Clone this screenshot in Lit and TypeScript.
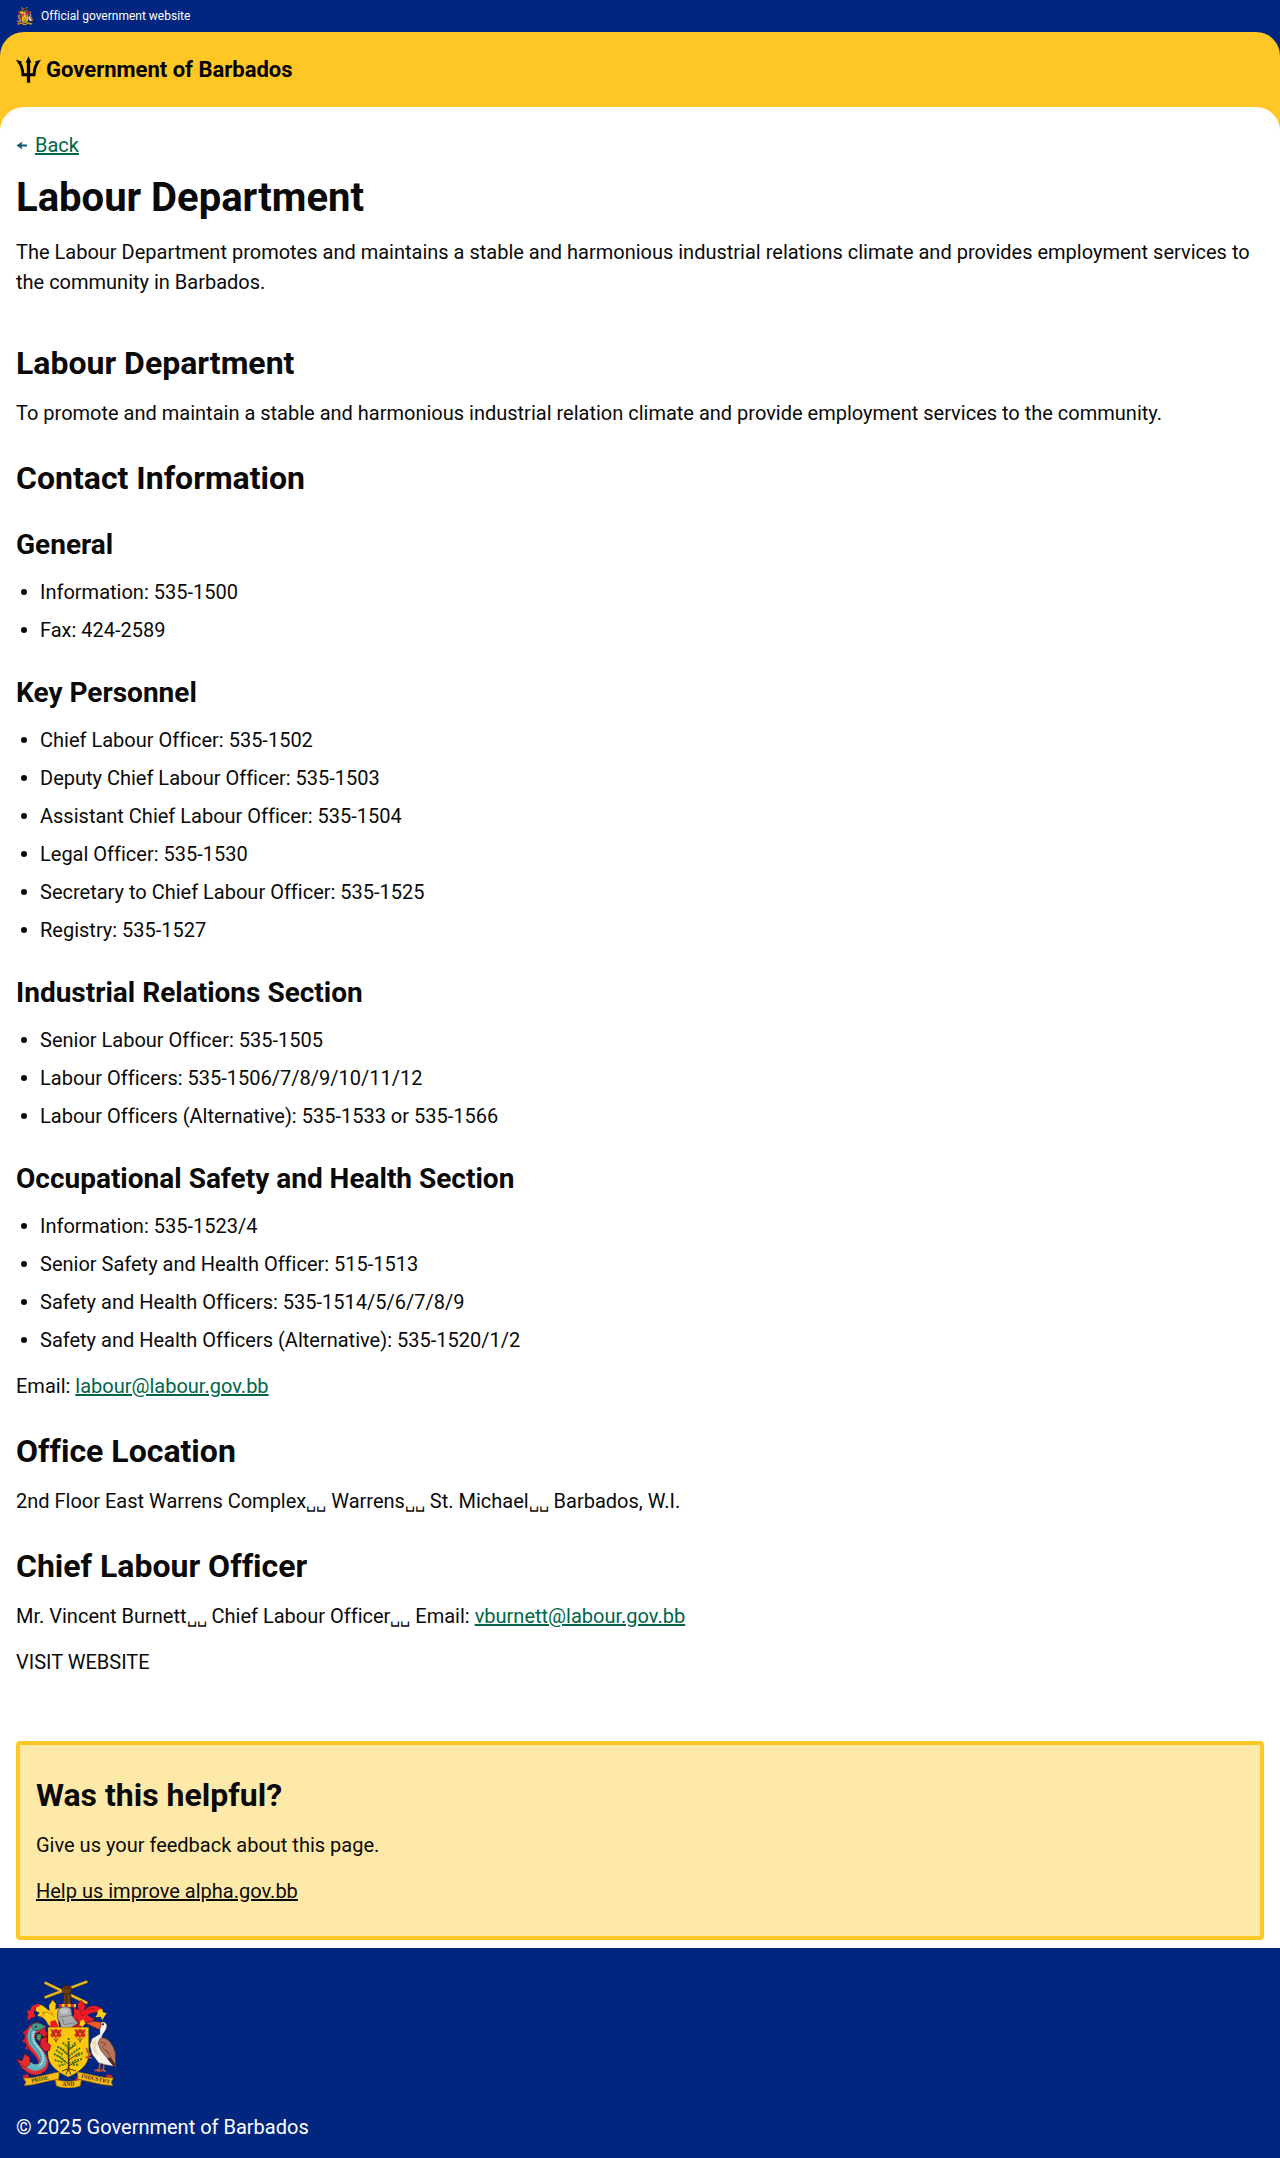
import { LitElement, html, css, svg } from "lit";
import { customElement, property } from "lit/decorators.js";

interface ContactGroup {
  title: string;
  entries: string[];
}

const CONTACT_GROUPS: ContactGroup[] = [
  {
    title: "General",
    entries: ["Information: 535-1500", "Fax: 424-2589"],
  },
  {
    title: "Key Personnel",
    entries: [
      "Chief Labour Officer: 535-1502",
      "Deputy Chief Labour Officer: 535-1503",
      "Assistant Chief Labour Officer: 535-1504",
      "Legal Officer: 535-1530",
      "Secretary to Chief Labour Officer: 535-1525",
      "Registry: 535-1527",
    ],
  },
  {
    title: "Industrial Relations Section",
    entries: [
      "Senior Labour Officer: 535-1505",
      "Labour Officers: 535-1506/7/8/9/10/11/12",
      "Labour Officers (Alternative): 535-1533 or 535-1566",
    ],
  },
  {
    title: "Occupational Safety and Health Section",
    entries: [
      "Information: 535-1523/4",
      "Senior Safety and Health Officer: 515-1513",
      "Safety and Health Officers: 535-1514/5/6/7/8/9",
      "Safety and Health Officers (Alternative): 535-1520/1/2",
    ],
  },
];

// One flower of the pair in the upper corners of the shield.
const flower = (x: number) => svg`
  <g transform="translate(${x} 221)">
    <path d="M-17-14L-7-11L0-15L8-11L17-14L14-3L17 6L9 12L3 8L0 14L-5 8L-11 12L-17 5L-13-3Z" fill="#d8301c" />
    <path d="M-8-4l5 4l-6 4M8-5l-5 5l6 4M0-8v6" stroke="#7a1a0c" stroke-width="2" fill="none" />
    <circle r="3" fill="#ffc726" />
    <path d="M0 12v15M-7 14l7 9l7-9" stroke="#8a4a12" stroke-width="3" fill="none" />
  </g>`;

@customElement("coat-of-arms")
export class CoatOfArms extends LitElement {
  static styles = css`
    :host {
      display: block;
      flex: none;
    }
    svg {
      display: block;
      width: 100%;
      height: 100%;
    }
    .motto {
      font: 700 17px "Liberation Serif", serif;
      fill: #4a3208;
      text-anchor: middle;
    }
  `;

  @property() label = "";

  render() {
    return html`
      <svg viewBox="48 60 300 324" role="img" aria-label=${this.label}>
        <!-- crossed canes held in a raised fist -->
        <path d="M134 113L262 65M134 68L262 130" stroke="#8f6a10" stroke-width="9" />
        <path d="M134 112L262 64M134 67L262 129" stroke="#eebd22" stroke-width="6" />
        <path d="M192 92L188 142H213L212 92Z" fill="#6b3d1c" stroke="#2c1608" stroke-width="2" />
        <path d="M187 84L193 77L207 76L214 83L213 96L205 103L193 102L187 95Z" fill="#6b3d1c" stroke="#2c1608" stroke-width="2" />
        <path d="M195 79v10M202 78v10M208 80v9M199 104v30" stroke="#2c1608" stroke-width="2" />

        <!-- mantling, left -->
        <path d="M178 203C165 208 150 205 142 190C138 178 128 170 112 168L118 158L106 152C112 138 104 134 92 146C104 130 122 130 136 143L148 152L147 136L158 120L168 132L166 148L178 143L172 165Z" fill="#ffcb14" stroke="#6b4d00" stroke-width="1" />
        <path d="M116 133C98 134 92 143 92 151L80 152L85 162L82 173L86 182L93 174L106 170L102 158C102 148 108 140 120 139Z" fill="#ee1c25" />
        <path d="M118 174L134 161L126 158L141 156L156 165M150 152L163 172" stroke="#a87800" stroke-width="2" fill="none" />
        <path d="M152 184L166 180L176 200L160 208L150 198Z" fill="#ee1c25" />

        <!-- mantling, right -->
        <path d="M225 200C240 204 254 198 260 186L276 184L284 177L272 172L262 165C276 156 290 154 300 160L308 150C294 134 272 134 258 146L250 154L256 138L244 120L232 132L236 150L222 144L222 165L212 172Z" fill="#ee1c25" stroke="#8c0a10" stroke-width="1" />
        <path d="M294 150L307 146L308 156L320 160L313 170L307 180L302 170L286 172L292 163Z" fill="#ffcb14" />
        <path d="M240 184L250 178L256 190L248 200L238 196Z" fill="#ffcb14" />
        <path d="M240 150L246 168L258 160M262 148L284 146" stroke="#8c0a10" stroke-width="2" fill="none" />

        <!-- wreath -->
        <path d="M176 137L228 137" stroke="#ee1c25" stroke-width="10" stroke-dasharray="9 9" />
        <path d="M185 137L228 137" stroke="#ffcb14" stroke-width="10" stroke-dasharray="9 9" />

        <!-- helmet -->
        <path d="M182 198L206 188L230 174L240 190L232 204L202 207Z" fill="#b5172a" />
        <path d="M174 150C184 138 204 138 213 147L216 167L234 190L214 202L184 205L180 188L172 174Z" fill="#a9abae" stroke="#4b4d52" stroke-width="2" />
        <path d="M175 172L215 166M188 176L192 194L226 188" stroke="#6b6d72" stroke-width="2" fill="none" />
        <path d="M180 149Q194 142 206 149L203 160L184 162Z" fill="#c4c6c8" />

        <!-- shield with bearded fig tree -->
        <path d="M144 202H266V285C264 315 240 335 205 351C170 335 146 315 144 285Z" fill="#fdc70e" stroke="#7d5a00" stroke-width="1" />
        ${flower(168)} ${flower(240)}
        <g fill="none" stroke="#4a3412" stroke-linecap="round">
          <path d="M206 250C203 280 209 300 205 330" stroke-width="5" />
          <path d="M206 312L170 286M206 300L238 278M206 286L180 264M206 270L228 254M206 318L236 302M205 326L187 333M206 326L226 332M205 328L198 342M206 328L212 342" stroke-width="3" />
        </g>
        <g fill="none" stroke="#3c7a1e" stroke-width="6" stroke-dasharray="6 3">
          <path d="M162 282L184 293L196 306M164 300L190 308M172 260L190 270L203 284M188 248L204 262M206 234V266M226 248L210 266M240 264L222 276L209 288M248 279L226 290M246 297L224 302L212 312M168 270L188 284M234 314L216 314M176 318L196 312" />
        </g>

        <!-- dolphin -->
        <path d="M114 196L138 196L136 212L144 222L134 232L120 222Z" fill="#d5202f" stroke="#7d0b16" stroke-width="2" />
        <path d="M80 208L68 218L78 228L66 246L80 250L76 268L92 268Z" fill="#d5202f" />
        <path d="M118 200C86 206 82 240 104 264C132 292 140 316 116 328C96 334 80 318 70 304" fill="none" stroke="#8d1420" stroke-width="32" />
        <path d="M118 200C86 206 82 240 104 264C132 292 140 316 116 328C96 334 80 318 70 304" fill="none" stroke="#e0303a" stroke-width="28" />
        <path d="M118 200C88 206 86 238 106 260C132 288 138 310 118 320C104 326 92 320 82 312" fill="none" stroke="#5fb4bd" stroke-width="19" />
        <path d="M106 212C94 220 96 242 112 258C134 284 136 306 116 318" fill="none" stroke="#d9f0ee" stroke-width="5" stroke-dasharray="3 3" />
        <path d="M98 208C86 224 90 246 104 262C124 284 130 300 112 314" fill="none" stroke="#1d5a70" stroke-width="3" stroke-dasharray="3 4" />
        <path d="M94 198C100 186 120 186 130 196L138 197L126 208L104 212Z" fill="#4a9a86" stroke="#14424c" stroke-width="2" />
        <circle cx="108" cy="200" r="3" fill="#0a1c20" />
        <path d="M112 222L124 224L120 244L110 236Z" fill="#4ea23b" />
        <path d="M122 236L142 230L140 246L152 256L148 272L134 274L120 256Z" fill="#e02030" stroke="#7d0b16" stroke-width="2" />
        <path d="M49 298L66 302L74 282L90 292L88 314L76 322L60 312Z" fill="#e3302f" stroke="#7d0b16" stroke-width="2" />

        <!-- pelican -->
        <path d="M300 306L298 328L284 332M312 306L310 330L292 334M310 332L318 334M272 282L262 276L260 264M272 284L260 292L276 294" fill="none" stroke="#c4552a" stroke-width="5" />
        <path d="M300 200C298 184 314 182 320 194C322 210 308 218 304 232L324 240L334 300L340 318L318 314L296 308L276 282L270 256L276 236L300 222Z" fill="#f4f2ea" stroke="#6b5a4a" stroke-width="1" />
        <path d="M300 236C320 228 338 250 346 278L347 324L328 302L302 270L294 250Z" fill="#b9745c" stroke="#5f3325" stroke-width="2" />
        <path d="M300 244L318 252L306 262L330 282M318 270L340 304" fill="none" stroke="#6d3a2b" stroke-width="2" />
        <path d="M322 296L347 326L344 310L330 292Z" fill="#4a2c25" />
        <path d="M276 244L290 240L288 264L296 288L280 274Z" fill="#f1deb0" />
        <path d="M256 189L280 184L302 187L304 196L298 208L280 200Z" fill="#ee5a2c" stroke="#7a2a12" stroke-width="2" />
        <circle cx="309" cy="193" r="3" fill="#111" />

        <!-- motto scroll -->
        <path d="M68 346L84 342L88 358L72 362ZM318 342L336 346L340 360L322 358ZM160 350L184 362L168 374ZM232 350L244 374L222 364Z" fill="#d5202f" />
        <path d="M70 354C104 356 138 342 178 336L176 358C140 362 106 376 72 377L78 366Z" fill="#f8bd1c" stroke="#8a5f00" stroke-width="2" />
        <path d="M232 336C270 342 304 354 340 354L334 366L338 377C304 376 268 364 234 358Z" fill="#f8bd1c" stroke="#8a5f00" stroke-width="2" />
        <path d="M166 358C190 366 220 366 244 358L241 378C220 386 190 386 169 378Z" fill="#f8bd1c" stroke="#8a5f00" stroke-width="2" />
        <text class="motto" transform="translate(121 363) rotate(-12)">PRIDE</text>
        <text class="motto" x="205" y="378">AND</text>
        <text class="motto" transform="translate(286 362) rotate(12)">INDUSTRY</text>
      </svg>
    `;
  }
}

@customElement("app-root")
export class AppRoot extends LitElement {
  static styles = css`
    :host {
      display: block;
      font: 400 20px/30px Roboto, sans-serif;
      font-variant-ligatures: none;
      color: #0a0a0a;
      background: #fff;
    }
    h1,
    h2,
    h3,
    p,
    ul {
      margin: 0;
      padding: 0;
    }
    a {
      color: #00654a;
      text-decoration: underline 2px;
    }
    svg {
      display: block;
      flex: none;
    }

    .masthead {
      background: #00267f;
    }
    .official {
      display: flex;
      align-items: center;
      gap: 8px;
      padding: 7px 16px;
      font-size: 12px;
      line-height: 18px;
      color: #fff;
    }
    .official-crest {
      width: 17px;
      height: 18px;
    }
    .brand {
      display: flex;
      padding: 24px 16px;
      border-radius: 24px 24px 0 0;
      background: #ffc726;
    }
    .brand-link {
      display: flex;
      align-items: center;
      gap: 5px;
      font-size: 22px;
      font-weight: 700;
      line-height: 27px;
      color: #000;
      text-decoration: none;
    }
    .trident {
      width: 25px;
      height: 27px;
    }

    .stage {
      background: #ffc726;
    }
    .sheet {
      padding: 24px 16px 8px;
      border-radius: 24px 24px 0 0;
      background: #fff;
    }
    .back {
      display: flex;
      align-items: center;
      gap: 8px;
      margin-bottom: 16px;
      line-height: 28px;
    }
    .back-arrow {
      width: 11px;
      height: 9px;
      fill: #0b5a64;
    }
    .title {
      margin-bottom: 16px;
      font-size: 40px;
      line-height: 46px;
    }
    .lead {
      margin-bottom: 48px;
    }
    .heading {
      margin: 32px 0 16px;
      font-size: 32px;
      line-height: 37px;
    }
    .heading.first {
      margin-top: 0;
    }
    .subheading {
      margin: 32px 0 16px;
      font-size: 28px;
      line-height: 32px;
    }
    .list {
      display: grid;
      gap: 8px;
      list-style: none;
    }
    .item {
      display: flex;
      align-items: center;
      gap: 13px;
      padding-left: 5px;
    }
    .item::before {
      content: "";
      flex: none;
      width: 6px;
      height: 6px;
      border-radius: 50%;
      background: currentColor;
    }
    .para {
      margin-top: 16px;
    }
    .blank {
      font-size: 16px;
      line-height: 16px;
    }

    .helpful {
      display: flow-root;
      margin-top: 64px;
      padding: 0 16px 30px;
      border: 4px solid #ffc726;
      border-radius: 4px;
      background: #ffe9a8;
    }
    .helpful-link {
      color: inherit;
    }

    .footer {
      display: grid;
      gap: 24px;
      padding: 32px 16px 16px;
      color: #fff;
      background: #00267f;
    }
    .footer-crest {
      width: 100px;
      height: 108px;
    }
  `;

  private blank = html`<span class="blank">␣␣</span>`;

  render() {
    return html`
      <header class="masthead">
        <div class="official">
          <coat-of-arms class="official-crest"></coat-of-arms>
          <span>Official government website</span>
        </div>
        <div class="brand">
          <a class="brand-link" href="/">
            <svg class="trident" viewBox="48 168 76 81" aria-hidden="true">
              <path
                d="M86 168L95 188L91 187V220H99C100 206 103 197 108 189L106 184L124 179L118 189C110 199 108 212 107 229H91V249H81V229H65C64 212 62 199 54 189L48 179L66 184L64 189C69 197 72 206 73 220H81V187L77 188Z"
              />
            </svg>
            <span>Government of Barbados</span>
          </a>
        </div>
      </header>

      <div class="stage">
        <main class="sheet">
          <nav class="back">
            <svg class="back-arrow" viewBox="0 0 22 18" aria-hidden="true">
              <path d="M1 9L13 1L11 7H22V11H11L13 17Z" />
            </svg>
            <a href="#back">Back</a>
          </nav>
          <h1 class="title">Labour Department</h1>
          <p class="lead">
            The Labour Department promotes and maintains a stable and harmonious industrial relations climate and
            provides employment services to the community in Barbados.
          </p>

          <article>
            <h2 class="heading first">Labour Department</h2>
            <p>
              To promote and maintain a stable and harmonious industrial relation climate and provide employment
              services to the community.
            </p>

            <h2 class="heading">Contact Information</h2>
            ${CONTACT_GROUPS.map(
              (group) => html`
                <h3 class="subheading">${group.title}</h3>
                <ul class="list">
                  ${group.entries.map((entry) => html`<li class="item">${entry}</li>`)}
                </ul>
              `,
            )}
            <p class="para">Email: <a href="mailto:labour@labour.gov.bb">labour@labour.gov.bb</a></p>

            <h2 class="heading">Office Location</h2>
            <p>2nd Floor East Warrens Complex${this.blank} Warrens${this.blank} St. Michael${this.blank} Barbados, W.I.</p>

            <h2 class="heading">Chief Labour Officer</h2>
            <p>
              Mr. Vincent Burnett${this.blank} Chief Labour Officer${this.blank} Email:
              <a href="mailto:vburnett@labour.gov.bb">vburnett@labour.gov.bb</a>
            </p>
            <p class="para">VISIT WEBSITE</p>
          </article>

          <section class="helpful">
            <h2 class="heading">Was this helpful?</h2>
            <p>Give us your feedback about this page.</p>
            <p class="para"><a class="helpful-link" href="#feedback">Help us improve alpha.gov.bb</a></p>
          </section>
        </main>
      </div>

      <footer class="footer">
        <coat-of-arms class="footer-crest" label="Coat of arms of Barbados"></coat-of-arms>
        <p>© 2025 Government of Barbados</p>
      </footer>
    `;
  }
}
